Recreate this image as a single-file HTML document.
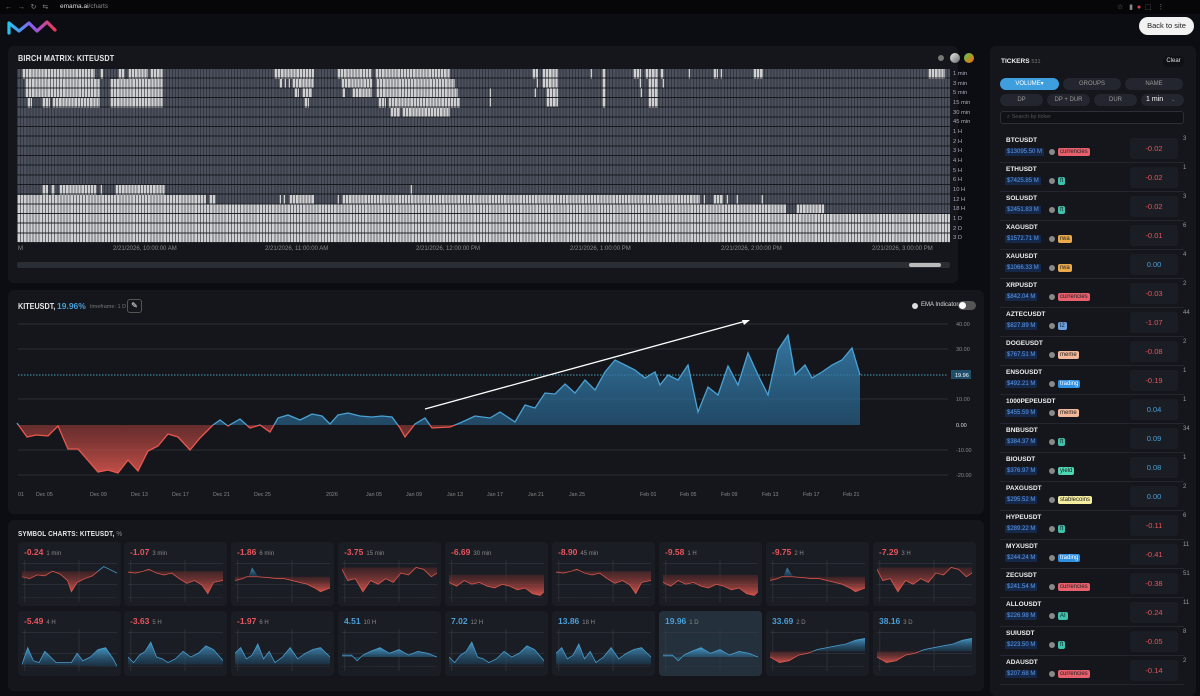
<!DOCTYPE html>
<html><head><meta charset="utf-8">
<style>
*{box-sizing:border-box;margin:0;padding:0}
body{width:1200px;height:691px;overflow:hidden;background:#0c0d12;font-family:"Liberation Sans",sans-serif;color:#ddd;position:relative}
.abs{position:absolute}
.panel{position:absolute;background:#14161c;border-radius:6px}
.title{position:absolute;font-weight:bold;font-size:8.5px;color:#e8e8ea;letter-spacing:0.2px;transform:scaleX(0.85);transform-origin:left}
.mx{position:absolute;left:17px;top:69px;width:933px;height:174px;background-color:#4b505c;
background-image:repeating-linear-gradient(90deg,rgba(20,22,28,.45) 0 1px,transparent 1px 3.1px)}
.w{position:absolute;background-color:#cfd0d2;background-image:repeating-linear-gradient(90deg,rgba(40,42,50,.6) 0 1px,transparent 1px 3.1px)}
.rowl{position:absolute;left:17px;top:69px;width:933px;height:174px;background-image:repeating-linear-gradient(180deg,transparent 0 8.67px,rgba(18,20,26,.9) 8.67px 9.67px)}
.lab{position:absolute;font-size:6px;color:#aab}
.card{position:absolute;width:103px;background:#1b1d24;border-radius:4px}
.card .v{position:absolute;left:6px;top:5px;font-size:8.5px;font-weight:bold}
.card .t{font-size:6px;color:#888;font-weight:normal;margin-left:3px}
.card svg{position:absolute;left:4px;top:18px;width:95px;height:42px}
.red{color:#e8545c}.blue{color:#4a9fd8}
.tk{position:absolute;left:1000px;width:184px;height:29px;border-bottom:1px solid #23262e}
.tk .n{position:absolute;left:6px;top:3px;font-size:6.5px;font-weight:bold;color:#eee}
.tk .p{position:absolute;left:5px;top:14px;font-size:6px;color:#5b9bea;background:#16284a;padding:1px 2px;border-radius:1px}
.tk .d{position:absolute;left:49px;top:15px;width:6px;height:6px;border-radius:50%;background:#888}
.tk .g{position:absolute;left:58px;top:14px;font-size:6px;padding:1px 2px;border-radius:2px;color:#222}
.tk .b{position:absolute;left:130px;top:4px;width:48px;height:21px;background:#1b1d24;border-radius:3px;font-size:7.5px;text-align:center;line-height:21px}
.tk .c{position:absolute;left:183px;top:2px;font-size:6px;color:#999}
.btn{position:absolute;height:12px;border-radius:6px;background:#23262e;font-size:6px;color:#999;text-align:center;line-height:12px}
</style></head><body>
<div class="abs" style="left:0;top:0;width:1200px;height:14px;background:#060608"></div>
<div class="abs" style="left:5px;top:3px;font-size:7px;color:#888">←&nbsp;&nbsp;&nbsp;→&nbsp;&nbsp;&nbsp;↻&nbsp;&nbsp;&nbsp;⇆</div>
<div class="abs" style="left:60px;top:3px;font-size:6.5px;color:#ddd">emama.ai<span style="color:#888">/charts</span></div>
<div class="abs" style="left:1117px;top:3px;font-size:7px;color:#888">☆ &nbsp; ▮ &nbsp;<span style="color:#d44">●</span>&nbsp; ⬚ &nbsp; ⋮</div>
<svg class="abs" style="left:7px;top:19px" width="50" height="16" viewBox="0 0 50 16"><defs><linearGradient id="lg" x1="0" x2="1"><stop offset="0" stop-color="#22c4f0"/><stop offset=".5" stop-color="#8a5cf0"/><stop offset="1" stop-color="#f0385a"/></linearGradient></defs><path d="M2 14 L2 4 L12 12 L22 4 L30 12 L40 3 L48 11" fill="none" stroke="url(#lg)" stroke-width="3.2" stroke-linejoin="round" stroke-linecap="round"/></svg>
<div class="abs" style="left:1139px;top:17px;width:55px;height:18px;border-radius:9px;background:#f2f2f2;color:#222;font-size:7.5px;text-align:center;line-height:18px">Back to site</div>

<div class="panel" style="left:8px;top:46px;width:950px;height:237px"></div>
<div class="title" style="left:18px;top:53px">BIRCH MATRIX: KITEUSDT</div>
<div class="abs" style="left:938px;top:55px;width:6px;height:6px;border-radius:50%;background:#777"></div>
<div class="abs" style="left:950px;top:53px;width:10px;height:10px;border-radius:50%;background:linear-gradient(135deg,#eee,#666)"></div>
<div class="abs" style="left:964px;top:53px;width:10px;height:10px;border-radius:50%;background:linear-gradient(135deg,#5c5,#f60)"></div>
<div class="mx">
<div class="w" style="left:5px;top:0;width:73px;height:9.7px"></div>
<div class="w" style="left:83px;top:0;width:3px;height:9.7px"></div>
<div class="w" style="left:101px;top:0;width:7px;height:9.7px"></div>
<div class="w" style="left:111px;top:0;width:20px;height:9.7px"></div>
<div class="w" style="left:133px;top:0;width:13px;height:9.7px"></div>
<div class="w" style="left:257px;top:0;width:40px;height:9.7px"></div>
<div class="w" style="left:320px;top:0;width:35px;height:9.7px"></div>
<div class="w" style="left:358px;top:0;width:75px;height:9.7px"></div>
<div class="w" style="left:515px;top:0;width:6px;height:9.7px"></div>
<div class="w" style="left:525px;top:0;width:16px;height:9.7px"></div>
<div class="w" style="left:573px;top:0;width:2px;height:9.7px"></div>
<div class="w" style="left:585px;top:0;width:4px;height:9.7px"></div>
<div class="w" style="left:616px;top:0;width:8px;height:9.7px"></div>
<div class="w" style="left:628px;top:0;width:13px;height:9.7px"></div>
<div class="w" style="left:643px;top:0;width:4px;height:9.7px"></div>
<div class="w" style="left:671px;top:0;width:2px;height:9.7px"></div>
<div class="w" style="left:696px;top:0;width:5px;height:9.7px"></div>
<div class="w" style="left:703px;top:0;width:2px;height:9.7px"></div>
<div class="w" style="left:736px;top:0;width:10px;height:9.7px"></div>
<div class="w" style="left:911px;top:0;width:17px;height:9.7px"></div>
<div class="w" style="left:8px;top:9.7px;width:75px;height:9.7px"></div>
<div class="w" style="left:93px;top:9.7px;width:53px;height:29px"></div>
<div class="w" style="left:262px;top:9.7px;width:3px;height:9.7px"></div>
<div class="w" style="left:267px;top:9.7px;width:2px;height:9.7px"></div>
<div class="w" style="left:271px;top:9.7px;width:2px;height:9.7px"></div>
<div class="w" style="left:275px;top:9.7px;width:22px;height:9.7px"></div>
<div class="w" style="left:324px;top:9.7px;width:31px;height:9.7px"></div>
<div class="w" style="left:359px;top:9.7px;width:79px;height:9.7px"></div>
<div class="w" style="left:519px;top:9.7px;width:2px;height:9.7px"></div>
<div class="w" style="left:525px;top:9.7px;width:16px;height:9.7px"></div>
<div class="w" style="left:585px;top:9.7px;width:4px;height:29px"></div>
<div class="w" style="left:622px;top:9.7px;width:2px;height:9.7px"></div>
<div class="w" style="left:631px;top:9.7px;width:10px;height:29px"></div>
<div class="w" style="left:645px;top:9.7px;width:2px;height:9.7px"></div>
<div class="w" style="left:8px;top:19.3px;width:75px;height:9.7px"></div>
<div class="w" style="left:277px;top:19.3px;width:5px;height:9.7px"></div>
<div class="w" style="left:285px;top:19.3px;width:10px;height:9.7px"></div>
<div class="w" style="left:325px;top:19.3px;width:3px;height:9.7px"></div>
<div class="w" style="left:335px;top:19.3px;width:20px;height:9.7px"></div>
<div class="w" style="left:359px;top:19.3px;width:82px;height:9.7px"></div>
<div class="w" style="left:472px;top:19.3px;width:2px;height:19px"></div>
<div class="w" style="left:517px;top:19.3px;width:2px;height:9.7px"></div>
<div class="w" style="left:529px;top:19.3px;width:12px;height:19px"></div>
<div class="w" style="left:623px;top:19.3px;width:2px;height:9.7px"></div>
<div class="w" style="left:10px;top:29px;width:5px;height:9.7px"></div>
<div class="w" style="left:25px;top:29px;width:8px;height:9.7px"></div>
<div class="w" style="left:35px;top:29px;width:48px;height:9.7px"></div>
<div class="w" style="left:287px;top:29px;width:5px;height:9.7px"></div>
<div class="w" style="left:361px;top:29px;width:8px;height:9.7px"></div>
<div class="w" style="left:371px;top:29px;width:72px;height:9.7px"></div>
<div class="w" style="left:373px;top:38.7px;width:10px;height:9.7px"></div>
<div class="w" style="left:385px;top:38.7px;width:48px;height:9.7px"></div>
<div class="w" style="left:25px;top:116px;width:6px;height:9.7px"></div>
<div class="w" style="left:34px;top:116px;width:4px;height:9.7px"></div>
<div class="w" style="left:42px;top:116px;width:38px;height:9.7px"></div>
<div class="w" style="left:83px;top:116px;width:2px;height:9.7px"></div>
<div class="w" style="left:98px;top:116px;width:50px;height:9.7px"></div>
<div class="w" style="left:393px;top:116px;width:2px;height:9.7px"></div>
<div class="w" style="left:0;top:125.7px;width:189px;height:9.7px"></div>
<div class="w" style="left:192px;top:125.7px;width:7px;height:9.7px"></div>
<div class="w" style="left:262px;top:125.7px;width:2px;height:9.7px"></div>
<div class="w" style="left:266px;top:125.7px;width:2px;height:9.7px"></div>
<div class="w" style="left:272px;top:125.7px;width:25px;height:9.7px"></div>
<div class="w" style="left:320px;top:125.7px;width:2px;height:9.7px"></div>
<div class="w" style="left:325px;top:125.7px;width:358px;height:9.7px"></div>
<div class="w" style="left:686px;top:125.7px;width:2px;height:9.7px"></div>
<div class="w" style="left:696px;top:125.7px;width:10px;height:9.7px"></div>
<div class="w" style="left:709px;top:125.7px;width:2px;height:9.7px"></div>
<div class="w" style="left:719px;top:125.7px;width:2px;height:9.7px"></div>
<div class="w" style="left:744px;top:125.7px;width:2px;height:9.7px"></div>
<div class="w" style="left:0;top:135.3px;width:769px;height:9.7px"></div>
<div class="w" style="left:779px;top:135.3px;width:28px;height:9.7px"></div>
<div class="w" style="left:0;top:145px;width:933px;height:29px"></div>
</div>
<div class="rowl"></div>
<div class="lab" style="left:953px;top:70px;line-height:9.67px;font-size:5.8px">1 min<br>3 min<br>5 min<br>15 min<br>30 min<br>45 min<br>1 H<br>2 H<br>3 H<br>4 H<br>5 H<br>6 H<br>10 H<br>12 H<br>18 H<br>1 D<br>2 D<br>3 D</div>
<div class="lab" style="left:18px;top:246px;color:#888">M</div>
<div class="lab" style="left:113px;top:246px;color:#888">2/21/2026, 10:00:00 AM</div>
<div class="lab" style="left:265px;top:246px;color:#888">2/21/2026, 11:00:00 AM</div>
<div class="lab" style="left:416px;top:246px;color:#888">2/21/2026, 12:00:00 PM</div>
<div class="lab" style="left:570px;top:246px;color:#888">2/21/2026, 1:00:00 PM</div>
<div class="lab" style="left:721px;top:246px;color:#888">2/21/2026, 2:00:00 PM</div>
<div class="lab" style="left:872px;top:246px;color:#888">2/21/2026, 3:00:00 PM</div>
<div class="abs" style="left:17px;top:262px;width:933px;height:6px;background:#2a2d34;border-radius:2px"></div>
<div class="abs" style="left:909px;top:263px;width:32px;height:4px;background:#bbb;border-radius:2px"></div>

<div class="panel" style="left:8px;top:290px;width:976px;height:224px"></div>
<div class="abs" style="left:18px;top:301px;font-size:8.5px;font-weight:bold;color:#e8e8ea;transform:scaleX(.85);transform-origin:left">KITEUSDT,</div>
<div class="abs" style="left:57px;top:301px;font-size:8.5px;font-weight:bold;color:#4a9fd8">19.96%</div>
<div class="abs" style="left:90px;top:304px;font-size:5.5px;color:#777">timeframe: 1 D</div>
<div class="abs" style="left:127px;top:299px;width:15px;height:14px;border:1px solid #555;border-radius:3px;color:#fff;font-size:8px;text-align:center;line-height:12px">✎</div>
<div class="abs" style="left:912px;top:303px;width:6px;height:6px;border-radius:50%;background:#ddd"></div>
<div class="abs" style="left:921px;top:302px;font-size:6px;color:#ddd">EMA Indicator</div>
<div class="abs" style="left:958px;top:301px;width:18px;height:9px;border-radius:5px;background:#555"><div style="position:absolute;left:1px;top:1px;width:7px;height:7px;border-radius:50%;background:#fff"></div></div>
<svg class="abs" style="left:0;top:290px" width="990" height="224" viewBox="0 290 990 224">
<defs>
<clipPath id="up"><rect x="0" y="290" width="990" height="135"/></clipPath>
<clipPath id="dn"><rect x="0" y="425" width="990" height="100"/></clipPath>
<linearGradient id="bg1" x1="0" y1="0" x2="0" y2="1"><stop offset="0" stop-color="#3a86b8" stop-opacity=".85"/><stop offset="1" stop-color="#1d4c6c" stop-opacity=".6"/></linearGradient>
<linearGradient id="rg1" x1="0" y1="0" x2="0" y2="1"><stop offset="0" stop-color="#6a2a2a" stop-opacity=".6"/><stop offset="1" stop-color="#e0584f" stop-opacity=".85"/></linearGradient>
</defs>
<g stroke="#2b2e37" stroke-width="1">
<line x1="18" y1="324" x2="948" y2="324"/><line x1="18" y1="349" x2="948" y2="349"/><line x1="18" y1="399" x2="948" y2="399"/><line x1="18" y1="450" x2="948" y2="450"/><line x1="18" y1="475" x2="948" y2="475"/>
</g>
<line x1="18" y1="375" x2="948" y2="375" stroke="#4a9fb8" stroke-width="1" stroke-dasharray="1.5 1.5"/>
<polygon clip-path="url(#up)" fill="url(#bg1)" points="17,425 17,423 27,437 36,435 48,436 58,426 68,449 78,449 98,472 108,470 118,473 128,460 138,471 148,451 158,446 168,434 178,437 190,450 200,438 213,425 220,420 228,426 240,419 250,428 260,425 270,432 278,418 288,415 300,420 312,414 322,416 330,424 338,415 348,413 360,416 372,417 382,416 392,417 400,428 405,437 415,424 425,418 432,428 450,427 460,423 475,416 490,418 500,412 515,422 525,405 535,408 545,393 555,394 565,384 575,393 585,380 595,390 605,372 615,360 625,365 635,370 645,378 655,372 660,385 668,375 678,380 688,365 698,412 708,387 718,395 728,366 738,385 748,353 758,375 768,395 778,350 788,335 795,375 805,365 812,378 822,372 832,365 842,360 852,348 860,375 860,425"/>
<polygon clip-path="url(#dn)" fill="url(#rg1)" points="17,425 17,423 27,437 36,435 48,436 58,426 68,449 78,449 98,472 108,470 118,473 128,460 138,471 148,451 158,446 168,434 178,437 190,450 200,438 213,425 220,420 228,426 240,419 250,428 260,425 270,432 278,418 288,415 300,420 312,414 322,416 330,424 338,415 348,413 360,416 372,417 382,416 392,417 400,428 405,437 415,424 425,418 432,428 450,427 460,423 475,416 490,418 500,412 515,422 525,405 860,425"/>
<polyline clip-path="url(#up)" fill="none" stroke="#4aa2d4" stroke-width="1.3" points="17,423 27,437 36,435 48,436 58,426 68,449 78,449 98,472 108,470 118,473 128,460 138,471 148,451 158,446 168,434 178,437 190,450 200,438 213,425 220,420 228,426 240,419 250,428 260,425 270,432 278,418 288,415 300,420 312,414 322,416 330,424 338,415 348,413 360,416 372,417 382,416 392,417 400,428 405,437 415,424 425,418 432,428 450,427 460,423 475,416 490,418 500,412 515,422 525,405 535,408 545,393 555,394 565,384 575,393 585,380 595,390 605,372 615,360 625,365 635,370 645,378 655,372 660,385 668,375 678,380 688,365 698,412 708,387 718,395 728,366 738,385 748,353 758,375 768,395 778,350 788,335 795,375 805,365 812,378 822,372 832,365 842,360 852,348 860,375"/>
<polyline clip-path="url(#dn)" fill="none" stroke="#e8584f" stroke-width="1.3" points="17,423 27,437 36,435 48,436 58,426 68,449 78,449 98,472 108,470 118,473 128,460 138,471 148,451 158,446 168,434 178,437 190,450 200,438 213,425 220,420 228,426 240,419 250,428 260,425 270,432 278,418 288,415 300,420 312,414 322,416 330,424 338,415 348,413 360,416 372,417 382,416 392,417 400,428 405,437 415,424 425,418 432,428 450,427 460,423 475,416 490,418 500,412 515,422"/>
<line x1="425" y1="409" x2="746" y2="321" stroke="#fff" stroke-width="1.3"/>
<polygon points="750,320 742,320 744,325" fill="#fff"/>
<g font-family="Liberation Sans" font-size="5.5" fill="#888">
<text x="956" y="326">40.00</text><text x="956" y="351">30.00</text><text x="956" y="401">10.00</text><text x="956" y="427" fill="#ddd">0.00</text><text x="956" y="452">-10.00</text><text x="956" y="477">-20.00</text>
</g>
<rect x="951" y="370" width="20" height="9" fill="#1f4e6a"/><text x="955" y="377" font-family="Liberation Sans" font-size="5.5" fill="#fff">19.96</text>
<g font-family="Liberation Sans" font-size="5.3" fill="#888">
<text x="18" y="496">01</text><text x="36" y="496">Dec 05</text><text x="90" y="496">Dec 09</text><text x="131" y="496">Dec 13</text><text x="172" y="496">Dec 17</text><text x="213" y="496">Dec 21</text><text x="254" y="496">Dec 25</text><text x="326" y="496">2026</text><text x="366" y="496">Jan 05</text><text x="406" y="496">Jan 09</text><text x="447" y="496">Jan 13</text><text x="487" y="496">Jan 17</text><text x="528" y="496">Jan 21</text><text x="569" y="496">Jan 25</text><text x="640" y="496">Feb 01</text><text x="680" y="496">Feb 05</text><text x="721" y="496">Feb 09</text><text x="762" y="496">Feb 13</text><text x="803" y="496">Feb 17</text><text x="843" y="496">Feb 21</text>
</g>
</svg>

<div class="panel" style="left:8px;top:520px;width:976px;height:171px"></div>
<div class="title" style="left:18px;top:529px;font-size:7.5px">SYMBOL CHARTS: KITEUSDT, <span style="color:#888;font-weight:normal">%</span></div>
<svg width="0" height="0" style="position:absolute">
<defs>
<linearGradient id="rr" x1="0" y1="0" x2="0" y2="1"><stop offset="0" stop-color="#5a2828" stop-opacity=".5"/><stop offset="1" stop-color="#e0584f" stop-opacity=".9"/></linearGradient>
<linearGradient id="bb" x1="0" y1="0" x2="0" y2="1"><stop offset="0" stop-color="#4aa2d4" stop-opacity=".9"/><stop offset="1" stop-color="#1d4c6c" stop-opacity=".4"/></linearGradient>
<g id="grid"><line x1="0" y1="4" x2="100" y2="4" stroke="#3a3d46" stroke-width=".6"/><line x1="0" y1="26" x2="100" y2="26" stroke="#3a3d46" stroke-width=".6"/><line x1="0" y1="40" x2="100" y2="40" stroke="#3a3d46" stroke-width=".6" stroke-dasharray="1 1"/><line x1="3" y1="0" x2="3" y2="45" stroke="#3a3d46" stroke-width=".6"/><line x1="60" y1="0" x2="60" y2="45" stroke="#3a3d46" stroke-width=".6"/></g>
<g id="A"><use href="#grid"/><polygon fill="url(#rr)" points="0,12 0,18 8,20 16,16 24,17 32,12 40,15 48,22 52,34 58,24 66,20 74,17 80,12 100,12"/><polyline fill="none" stroke="#e0584f" stroke-width=".8" points="0,18 8,20 16,16 24,17 32,12 40,15 48,22 52,34 58,24 66,20 74,17 80,12"/><polyline fill="none" stroke="#4aa2d4" stroke-width=".8" points="80,12 86,7 92,10 100,14"/></g>
<g id="B"><use href="#grid"/><polygon fill="url(#rr)" points="0,12 0,13 8,14 16,12 22,10 30,14 38,16 46,14 54,20 62,25 70,22 78,27 84,36 90,24 100,22 100,12"/><polyline fill="none" stroke="#e0584f" stroke-width=".8" points="0,13 8,14 16,12 22,10 30,14 38,16 46,14 54,20 62,25 70,22 78,27 84,36 90,24 100,22"/></g>
<g id="C"><use href="#grid"/><polygon fill="url(#bb)" points="14,18 18,8 24,17"/><polygon fill="url(#rr)" points="0,18 0,22 8,20 12,18 24,18 36,19 44,20 52,20 60,22 68,24 76,26 84,30 90,34 100,30 100,18"/><polyline fill="none" stroke="#e0584f" stroke-width=".8" points="0,22 8,20 12,18 24,18 36,19 44,20 52,20 60,22 68,24 76,26 84,30 90,34 100,30"/></g>
<g id="D"><use href="#grid"/><polygon fill="url(#rr)" points="0,8 0,10 6,22 14,20 22,34 30,22 38,26 46,20 54,24 62,14 70,16 78,8 86,10 94,18 100,14 100,8"/><polyline fill="none" stroke="#e0584f" stroke-width=".8" points="0,10 6,22 14,20 22,34 30,22 38,26 46,20 54,24 62,14 70,16 78,8 86,10 94,18 100,14"/></g>
<g id="E"><use href="#grid"/><polygon fill="url(#rr)" points="0,16 0,24 8,28 16,22 24,26 32,24 40,28 48,30 56,26 64,28 72,32 80,30 88,36 96,38 100,34 100,16"/><polyline fill="none" stroke="#e0584f" stroke-width=".8" points="0,24 8,28 16,22 24,26 32,24 40,28 48,30 56,26 64,28 72,32 80,30 88,36 96,38 100,34"/></g>
<g id="F"><use href="#grid"/><polygon fill="url(#bb)" points="0,38 6,20 12,34 18,36 24,24 30,30 36,36 44,36 52,36 58,26 64,34 72,30 80,22 88,20 96,32 100,40"/><polyline fill="none" stroke="#4aa2d4" stroke-width=".8" points="0,38 6,20 12,34 18,36 24,24 30,30 36,36 44,36 52,36 58,26 64,34 72,30 80,22 88,20 96,32 100,40"/></g>
<g id="G"><use href="#grid"/><polygon fill="url(#bb)" points="0,38 0,30 6,36 12,28 18,24 24,14 30,30 36,32 42,36 50,32 58,24 66,30 74,26 82,18 90,22 100,34 100,38"/><polyline fill="none" stroke="#4aa2d4" stroke-width=".8" points="0,30 6,36 12,28 18,24 24,14 30,30 36,32 42,36 50,32 58,24 66,30 74,26 82,18 90,22 100,34"/></g>
<g id="H"><use href="#grid"/><polygon fill="url(#bb)" points="0,38 0,26 6,20 12,32 18,28 24,16 30,32 36,24 42,36 50,30 58,20 66,32 74,26 82,22 90,20 100,30 100,38"/><polyline fill="none" stroke="#4aa2d4" stroke-width=".8" points="0,26 6,20 12,32 18,28 24,16 30,32 36,24 42,36 50,30 58,20 66,32 74,26 82,22 90,20 100,30"/></g>
<g id="I"><use href="#grid"/><polygon fill="url(#bb)" points="0,30 0,28 10,28 16,34 22,28 30,24 40,20 50,26 60,22 70,28 80,24 90,26 100,30"/><polyline fill="none" stroke="#4aa2d4" stroke-width=".8" points="0,28 10,28 16,34 22,28 30,24 40,20 50,26 60,22 70,28 80,24 90,26 100,30"/></g>
<g id="J"><use href="#grid"/><polygon fill="url(#rr)" points="0,24 0,30 10,36 20,34 30,28 40,26 45,24"/><polygon fill="url(#bb)" points="45,24 50,22 60,20 70,18 80,16 90,12 100,10 100,24"/><polyline fill="none" stroke="#e0584f" stroke-width=".8" points="0,30 10,36 20,34 30,28 40,26 45,24"/><polyline fill="none" stroke="#4aa2d4" stroke-width=".8" points="45,24 50,22 60,20 70,18 80,16 90,12 100,10"/></g>
</defs></svg>

<div class="card" style="left:18px;top:542px;height:64px"><div class="v red">-0.24<span class="t">1 min</span></div><svg viewBox="0 0 100 45" preserveAspectRatio="none"><use href="#A"/></svg></div>
<div class="card" style="left:124px;top:542px;height:64px"><div class="v red">-1.07<span class="t">3 min</span></div><svg viewBox="0 0 100 45" preserveAspectRatio="none"><use href="#B"/></svg></div>
<div class="card" style="left:231px;top:542px;height:64px"><div class="v red">-1.86<span class="t">6 min</span></div><svg viewBox="0 0 100 45" preserveAspectRatio="none"><use href="#C"/></svg></div>
<div class="card" style="left:338px;top:542px;height:64px"><div class="v red">-3.75<span class="t">15 min</span></div><svg viewBox="0 0 100 45" preserveAspectRatio="none"><use href="#D"/></svg></div>
<div class="card" style="left:445px;top:542px;height:64px"><div class="v red">-6.69<span class="t">30 min</span></div><svg viewBox="0 0 100 45" preserveAspectRatio="none"><use href="#E"/></svg></div>
<div class="card" style="left:552px;top:542px;height:64px"><div class="v red">-8.90<span class="t">45 min</span></div><svg viewBox="0 0 100 45" preserveAspectRatio="none"><use href="#B"/></svg></div>
<div class="card" style="left:659px;top:542px;height:64px"><div class="v red">-9.58<span class="t">1 H</span></div><svg viewBox="0 0 100 45" preserveAspectRatio="none"><use href="#E"/></svg></div>
<div class="card" style="left:766px;top:542px;height:64px"><div class="v red">-9.75<span class="t">2 H</span></div><svg viewBox="0 0 100 45" preserveAspectRatio="none"><use href="#C"/></svg></div>
<div class="card" style="left:873px;top:542px;height:64px"><div class="v red">-7.29<span class="t">3 H</span></div><svg viewBox="0 0 100 45" preserveAspectRatio="none"><use href="#D"/></svg></div>

<div class="card" style="left:18px;top:611px;height:65px"><div class="v red">-5.49<span class="t">4 H</span></div><svg viewBox="0 0 100 45" preserveAspectRatio="none"><use href="#F"/></svg></div>
<div class="card" style="left:124px;top:611px;height:65px"><div class="v red">-3.63<span class="t">5 H</span></div><svg viewBox="0 0 100 45" preserveAspectRatio="none"><use href="#G"/></svg></div>
<div class="card" style="left:231px;top:611px;height:65px"><div class="v red">-1.97<span class="t">6 H</span></div><svg viewBox="0 0 100 45" preserveAspectRatio="none"><use href="#H"/></svg></div>
<div class="card" style="left:338px;top:611px;height:65px"><div class="v blue">4.51<span class="t">10 H</span></div><svg viewBox="0 0 100 45" preserveAspectRatio="none"><use href="#I"/></svg></div>
<div class="card" style="left:445px;top:611px;height:65px"><div class="v blue">7.02<span class="t">12 H</span></div><svg viewBox="0 0 100 45" preserveAspectRatio="none"><use href="#G"/></svg></div>
<div class="card" style="left:552px;top:611px;height:65px"><div class="v blue">13.86<span class="t">18 H</span></div><svg viewBox="0 0 100 45" preserveAspectRatio="none"><use href="#H"/></svg></div>
<div class="card" style="left:659px;top:611px;height:65px;background:#24303c"><div class="v blue">19.96<span class="t">1 D</span></div><svg viewBox="0 0 100 45" preserveAspectRatio="none"><use href="#I"/></svg></div>
<div class="card" style="left:766px;top:611px;height:65px"><div class="v blue">33.69<span class="t">2 D</span></div><svg viewBox="0 0 100 45" preserveAspectRatio="none"><use href="#J"/></svg></div>
<div class="card" style="left:873px;top:611px;height:65px"><div class="v blue">38.16<span class="t">3 D</span></div><svg viewBox="0 0 100 45" preserveAspectRatio="none"><use href="#J"/></svg></div>

<div class="panel" style="left:990px;top:46px;width:206px;height:650px"></div>
<div class="abs" style="left:1001px;top:58px;font-size:6.5px;font-weight:bold;color:#eee">TICKERS <span style="color:#777;font-weight:normal;font-size:5.5px">531</span></div>
<div class="abs" style="left:1163px;top:56px;width:21px;height:11px;border-radius:5px;background:#0f1015;font-size:6px;color:#ddd;text-align:center;line-height:11px">Clear</div>
<div class="btn" style="left:1000px;top:78px;width:59px;background:#3f9ede;color:#fff">VOLUME▾</div>
<div class="btn" style="left:1063px;top:78px;width:58px">GROUPS</div>
<div class="btn" style="left:1125px;top:78px;width:58px">NAME</div>
<div class="btn" style="left:1000px;top:94px;width:43px">DP</div>
<div class="btn" style="left:1047px;top:94px;width:43px">DP + DUR</div>
<div class="btn" style="left:1094px;top:94px;width:43px">DUR</div>
<div class="btn" style="left:1141px;top:94px;width:43px;color:#fff;font-size:7px;text-align:left;padding-left:5px">1 min <span style="color:#777;font-size:5px;margin-left:6px">⌄</span></div>
<div class="abs" style="left:1000px;top:111px;width:184px;height:13px;border:1px solid #2c2f38;border-radius:3px;background:#101116;font-size:5.5px;color:#555;line-height:11px;padding-left:6px">⌕ Search by ticker</div>

<div class="tk" style="top:134px"><div class="n">BTCUSDT</div><div class="p">$13095.50 M</div><div class="d"></div><div class="g" style="background:#e8606c">currencies</div><div class="b red">-0.02</div><div class="c">3</div></div>
<div class="tk" style="top:163px"><div class="n">ETHUSDT</div><div class="p">$7425.85 M</div><div class="d"></div><div class="g" style="background:#3cc2ad">ft</div><div class="b red">-0.02</div><div class="c">1</div></div>
<div class="tk" style="top:192px"><div class="n">SOLUSDT</div><div class="p">$2451.83 M</div><div class="d"></div><div class="g" style="background:#3cc2ad">ft</div><div class="b red">-0.02</div><div class="c">3</div></div>
<div class="tk" style="top:221px"><div class="n">XAGUSDT</div><div class="p">$1572.71 M</div><div class="d"></div><div class="g" style="background:#eaa94a">rwa</div><div class="b red">-0.01</div><div class="c">6</div></div>
<div class="tk" style="top:250px"><div class="n">XAUUSDT</div><div class="p">$1066.33 M</div><div class="d"></div><div class="g" style="background:#eaa94a">rwa</div><div class="b blue">0.00</div><div class="c">4</div></div>
<div class="tk" style="top:279px"><div class="n">XRPUSDT</div><div class="p">$842.04 M</div><div class="d"></div><div class="g" style="background:#e8606c">currencies</div><div class="b red">-0.03</div><div class="c">2</div></div>
<div class="tk" style="top:308px"><div class="n">AZTECUSDT</div><div class="p">$827.89 M</div><div class="d"></div><div class="g" style="background:#6a9fe0">l2</div><div class="b red">-1.07</div><div class="c">44</div></div>
<div class="tk" style="top:337px"><div class="n">DOGEUSDT</div><div class="p">$767.51 M</div><div class="d"></div><div class="g" style="background:#f2b899">meme</div><div class="b red">-0.08</div><div class="c">2</div></div>
<div class="tk" style="top:366px"><div class="n">ENSOUSDT</div><div class="p">$492.21 M</div><div class="d"></div><div class="g" style="background:#2f8fe0;color:#fff">trading</div><div class="b red">-0.19</div><div class="c">1</div></div>
<div class="tk" style="top:395px"><div class="n">1000PEPEUSDT</div><div class="p">$455.59 M</div><div class="d"></div><div class="g" style="background:#f2b899">meme</div><div class="b blue">0.04</div><div class="c">1</div></div>
<div class="tk" style="top:424px"><div class="n">BNBUSDT</div><div class="p">$384.37 M</div><div class="d"></div><div class="g" style="background:#3cc2ad">ft</div><div class="b blue">0.09</div><div class="c">34</div></div>
<div class="tk" style="top:453px"><div class="n">BIOUSDT</div><div class="p">$376.97 M</div><div class="d"></div><div class="g" style="background:#4fd6b5">yield</div><div class="b blue">0.08</div><div class="c">1</div></div>
<div class="tk" style="top:482px"><div class="n">PAXGUSDT</div><div class="p">$295.52 M</div><div class="d"></div><div class="g" style="background:#f5eea0">stablecoins</div><div class="b blue">0.00</div><div class="c">2</div></div>
<div class="tk" style="top:511px"><div class="n">HYPEUSDT</div><div class="p">$289.22 M</div><div class="d"></div><div class="g" style="background:#3cc2ad">ft</div><div class="b red">-0.11</div><div class="c">6</div></div>
<div class="tk" style="top:540px"><div class="n">MYXUSDT</div><div class="p">$244.24 M</div><div class="d"></div><div class="g" style="background:#2f8fe0;color:#fff">trading</div><div class="b red">-0.41</div><div class="c">11</div></div>
<div class="tk" style="top:569px"><div class="n">ZECUSDT</div><div class="p">$241.54 M</div><div class="d"></div><div class="g" style="background:#e8606c">currencies</div><div class="b red">-0.38</div><div class="c">51</div></div>
<div class="tk" style="top:598px"><div class="n">ALLOUSDT</div><div class="p">$226.98 M</div><div class="d"></div><div class="g" style="background:#3cc2ad">AI</div><div class="b red">-0.24</div><div class="c">11</div></div>
<div class="tk" style="top:627px"><div class="n">SUIUSDT</div><div class="p">$223.50 M</div><div class="d"></div><div class="g" style="background:#3cc2ad">ft</div><div class="b red">-0.05</div><div class="c">8</div></div>
<div class="tk" style="top:656px"><div class="n">ADAUSDT</div><div class="p">$207.68 M</div><div class="d"></div><div class="g" style="background:#e8606c">currencies</div><div class="b red">-0.14</div><div class="c">2</div></div>
</body></html>
